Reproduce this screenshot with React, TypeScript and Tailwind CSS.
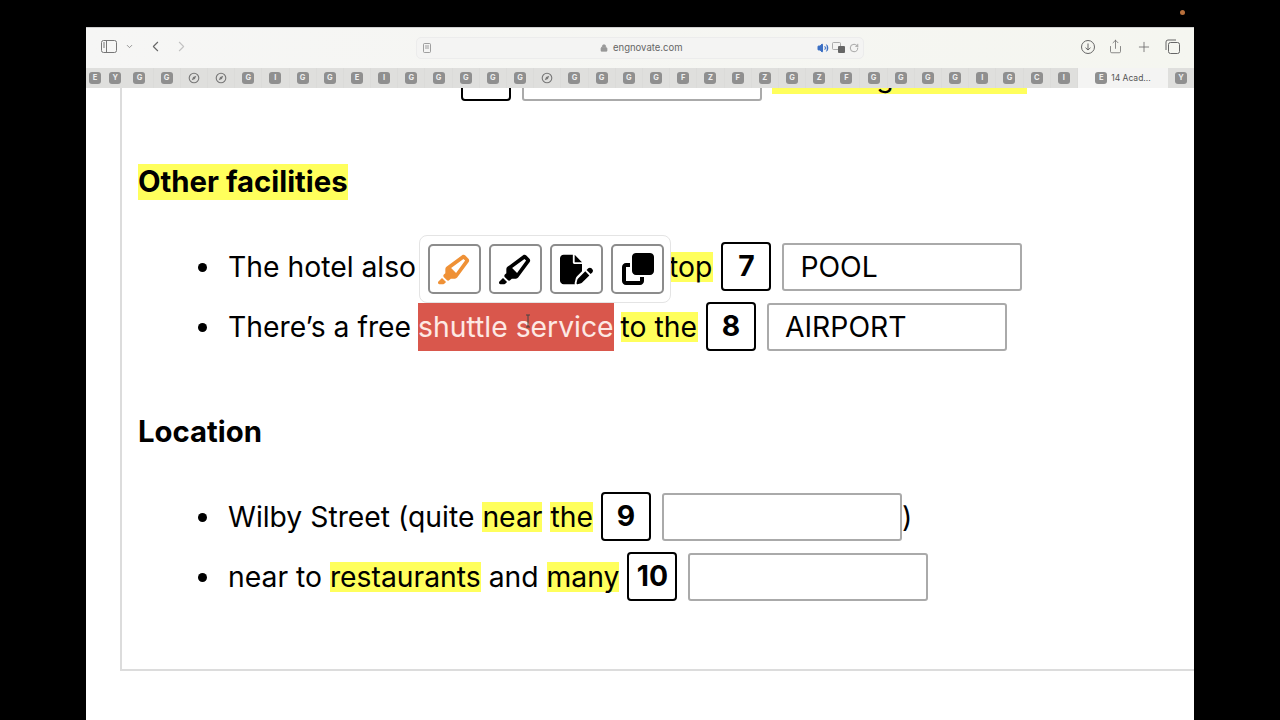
import { ReactNode } from "react"
import { FaHighlighter, FaFilePen, FaClone } from "react-icons/fa6"
import { ChevronDown, ChevronLeft, ChevronRight, Lock, Plus, RotateCw, Share, Volume2 } from "lucide-react"

const tabLetters = "GG**GIGGEIGGGGG*GGGGFZFZGZFGGGGIGCI".split("")

const Favicon = ({ letter }: { letter: string }) => {
  if (letter === "*") {
    return (
      <svg width="12" height="12" viewBox="0 0 12 12" className="text-[#777]">
        <circle cx="6" cy="6" r="4.8" fill="none" stroke="currentColor" strokeWidth="1.1" />
        <path d="M8.3 3.7 6.9 6.9 3.7 8.3 5.1 5.1Z" fill="currentColor" />
      </svg>
    )
  }
  return (
    <span className="flex h-[12px] w-[12px] items-center justify-center rounded-[3px] bg-[#8f8f8f] text-[7.5px] font-bold leading-none text-[#eee]">
      {letter}
    </span>
  )
}

const FavCell = ({ letter, className }: { letter: string; className: string }) => (
  <div className={`flex h-full shrink-0 items-center justify-center ${className}`}>
    <Favicon letter={letter} />
  </div>
)

const BrowserBar = () => (
  <div className="shrink-0">
    <div className="flex h-[41px] items-center border-t border-[#d0d0d0] bg-gradient-to-r from-[#f6f6f5] to-[#f5f6f0] text-[#777]">
      <div className="flex w-[330px] shrink-0 items-center pb-[3px] pl-[15px]">
        <svg width="16" height="13" viewBox="0 0 16 13" fill="none" stroke="currentColor" strokeWidth="1">
          <rect x="0.5" y="0.5" width="15" height="12" rx="2" />
          <path d="M5.5 0.5v12" />
          <path d="M2 3h2M2 5h2M2 7h2" />
        </svg>
        <ChevronDown size={9} className="ml-[8px]" />
        <ChevronLeft size={17} strokeWidth={1.5} className="ml-[13px] text-[#666]" />
        <ChevronRight size={17} strokeWidth={1.5} className="ml-[9px] text-[#c2c2c2]" />
      </div>
      <div className="flex h-[22px] w-[448px] shrink-0 items-center rounded-[5px] border border-[#ececec] bg-[#f4f4f3] pl-[6px] pr-[3px]">
        <svg width="8" height="10" viewBox="0 0 8 10" fill="none" stroke="#888" strokeWidth="0.8">
          <rect x="0.5" y="0.5" width="7" height="9" rx="1" />
          <path d="M2 3h4M2 5h4" />
        </svg>
        <div className="ml-[169px] flex w-[83px] items-center">
          <Lock size={8} fill="currentColor" className="text-[#999]" />
          <span className="ml-[5px] font-['Inter',sans-serif] text-[9.5px] text-[#666]">engnovate.com</span>
        </div>
        <Volume2 size={12} fill="#3b6fc4" className="ml-[134px] text-[#3b6fc4]" />
        <svg width="14" height="12" viewBox="0 0 14 12" className="ml-[3px]">
          <rect x="0.5" y="0.5" width="8" height="7" rx="1" fill="none" stroke="#999" strokeWidth="0.8" />
          <rect x="6" y="4" width="7" height="7" rx="1" fill="#666" />
        </svg>
        <RotateCw size={10} className="ml-[3px] text-[#999]" />
      </div>
      <div className="ml-[216px] flex items-center gap-[12px] pb-[3px] text-[#666]">
        <svg width="16" height="16" viewBox="0 0 16 16" fill="none" stroke="currentColor" strokeWidth="1">
          <circle cx="8" cy="8" r="6.5" />
          <path d="M8 4.5v6.5M5.5 8.7 8 11l2.5-2.3" />
        </svg>
        <Share size={15} strokeWidth={1.2} />
        <Plus size={16} strokeWidth={1.2} className="ml-[1px]" />
        <svg width="15" height="15" viewBox="0 0 15 15" fill="none" stroke="currentColor" strokeWidth="1" className="ml-[1px]">
          <rect x="3.5" y="3.5" width="11" height="11" rx="2" />
          <path d="M1 11V3a2 2 0 0 1 2-2h8" />
        </svg>
      </div>
    </div>
    <div className="flex h-[20px] bg-[#dfdfdd]">
      <FavCell letter="E" className="w-[18px]" />
      <FavCell letter="Y" className="w-[22.4px]" />
      {tabLetters.map((letter, i) => (
        <FavCell key={i} letter={letter} className="w-[27.2px] border-r border-[#dbdbd9]" />
      ))}
      <div className="flex w-[90px] shrink-0 items-center justify-center gap-[4px] bg-[#f4f4f3]">
        <Favicon letter="E" />
        <span className="font-['Inter',sans-serif] text-[8.5px] text-[#555]">14 Acad...</span>
      </div>
      <FavCell letter="Y" className="flex-1" />
    </div>
  </div>
)

const Mark = ({ children, className = "" }: { children: ReactNode; className?: string }) => (
  <span className={`bg-[#ffff5c] py-[1px] ${className}`}>{children}</span>
)

const NumberBox = ({ n }: { n: number }) => (
  <span className="mb-[2px] ml-[8px] flex h-[49px] w-[50px] shrink-0 items-center justify-center rounded-[4px] border-2 border-black font-bold">
    {n}
  </span>
)

const AnswerBox = ({ value }: { value?: string }) => (
  <span className="ml-[11px] flex h-[48px] w-[240px] shrink-0 items-center rounded-[3px] border-2 border-[#aaa] pl-[16px]">
    {value}
  </span>
)

const Row = ({ children, className = "" }: { children: ReactNode; className?: string }) => (
  <li className={`flex h-[48px] items-center whitespace-pre ${className}`}>
    <span className="ml-[60px] mr-[21px] h-[9px] w-[9px] shrink-0 rounded-full bg-black" />
    {children}
  </li>
)

const Heading = ({ children, className }: { children: ReactNode; className: string }) => (
  <h2 className={`flex h-[36px] items-center text-[29.3px] font-bold ${className}`}>{children}</h2>
)

const ToolButton = ({ children }: { children: ReactNode }) => (
  <button className="flex h-[50px] w-[53px] items-center justify-center rounded-[5px] border-2 border-[#8c8c8c] bg-white text-[33px]">
    {children}
  </button>
)

const App = () => (
  <div className="flex h-[720px] w-[1280px] flex-col overflow-hidden bg-black font-['Inter',sans-serif] text-[28.3px] leading-none text-black">
    <div className="flex h-[27px] shrink-0 items-start justify-end pr-[95px] pt-[10px]">
      <span className="h-[5px] w-[5px] rounded-full bg-[#b8703c]" />
    </div>
    <div className="mx-[86px] flex min-h-0 flex-1 flex-col bg-white">
      <BrowserBar />
      <div className="min-h-0 flex-1 overflow-hidden pl-[34px]">
        <div className="-mt-[35px] border-b-2 border-l-2 border-[#dcdcdc] pb-[68px] pl-[16px]">
          <ul>
            <Row>
              <span className="w-[225px] shrink-0">Rooms will cost £</span>
              <NumberBox n={6} />
              <AnswerBox value="100" />
              <Mark className="ml-[10px] w-[255px] overflow-hidden !py-[3px]">including breakfast.</Mark>
            </Row>
          </ul>
          <Heading className="mt-[63px]"><span className="bg-[#ffff5c] py-[3px]">Other facilities</span></Heading>
          <ul className="relative mt-[43px]">
            <Row>
              The hotel also
              <span className="w-[253px] shrink-0" />
              <Mark className="pr-[1px]">top</Mark>
              <NumberBox n={7} />
              <AnswerBox value="POOL" />
            </Row>
            <Row className="mt-[12px]">
              There’s a free
              <span className="relative ml-[7px] flex h-[48px] items-center bg-[#d9574c] text-[#fde9e4]">
                shuttle service
                <svg width="6" height="14" viewBox="0 0 6 14" className="absolute left-[107px] top-[11px]">
                  <path d="M1 1h4M3 1v12M1 13h4" stroke="#444" strokeWidth="1" fill="none" />
                </svg>
              </span>
              <Mark className="ml-[7px] pr-[1px]">to the</Mark>
              <NumberBox n={8} />
              <AnswerBox value="AIRPORT" />
            </Row>
            <div className="absolute left-[281px] -top-[8px] flex h-[68px] w-[252px] items-center gap-[8px] rounded-[8px] border border-[#e4e4e4] bg-white pl-[8px]">
              <ToolButton><FaHighlighter className="text-[#ef9136]" /></ToolButton>
              <ToolButton><FaHighlighter /></ToolButton>
              <ToolButton><FaFilePen /></ToolButton>
              <ToolButton><FaClone className="text-[32px]" /></ToolButton>
            </div>
          </ul>
          <Heading className="mt-[63px]">Location</Heading>
          <ul className="mt-[43px]">
            <Row>
              Wilby Street (quite <Mark>near</Mark>
              <Mark className="ml-[8px]">the</Mark>
              <NumberBox n={9} />
              <AnswerBox />
              )
            </Row>
            <Row className="mt-[12px]">
              near to <Mark>restaurants</Mark> and <Mark>many</Mark>
              <NumberBox n={10} />
              <AnswerBox />
            </Row>
          </ul>
        </div>
      </div>
    </div>
  </div>
)

export default App
